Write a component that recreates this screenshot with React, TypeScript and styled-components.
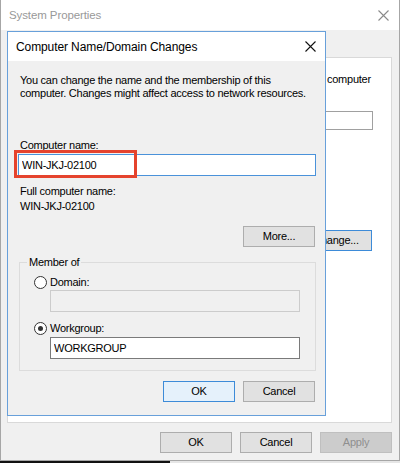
import styled, { createGlobalStyle } from "styled-components";

const GlobalStyle = createGlobalStyle`
  html, body {
    margin: 0;
    padding: 0;
    background: #ffffff;
  }
  body {
    font-family: "Liberation Sans", Arial, sans-serif;
    font-size: 11px;
    letter-spacing: -0.25px;
    color: #000;
  }
  * {
    box-sizing: border-box;
  }
`;

const Screen = styled.div`
  width: 400px;
  height: 463px;
  overflow: hidden;
  display: flex;
  flex-direction: column;
`;

const Window = styled.div`
  position: relative;
  width: 400px;
  height: 461px;
  display: flex;
  flex-direction: column;
  background: #f0f0f0;
  border-left: 1px solid #a6a6a6;
  border-right: 1px solid #a6a6a6;
  border-bottom: 1px solid #a6a6a6;
`;

const TitleBar = styled.div<{ $height: number; $padRight: number }>`
  height: ${(p) => p.$height}px;
  flex: none;
  display: flex;
  align-items: center;
  justify-content: space-between;
  padding: 0 ${(p) => p.$padRight}px 0 8px;
  background: #ffffff;
`;

const WindowTitle = styled.span`
  font-size: 11.5px;
  color: #999999;
  letter-spacing: -0.1px;
`;

const DialogTitle = styled.span`
  font-size: 12px;
  color: #000;
  letter-spacing: -0.1px;
`;

const WindowBody = styled.div`
  flex: 1;
  display: flex;
  flex-direction: column;
  padding: 27px 7px 7px 6px;
`;

const TabPage = styled.div`
  height: 366px;
  flex: none;
  border: 1px solid #d9d9d9;
  background: #ffffff;
  display: flex;
  flex-direction: column;
  padding-top: 15px;
`;

const HiddenText = styled.p`
  margin: 0 0 0 319px;
  line-height: 13px;
  white-space: nowrap;
`;

const HiddenBox = styled.div`
  margin: 25px 0 0 292px;
  width: 73px;
  height: 19px;
  border: 1px solid #a0a0a0;
  background: #fff;
`;

const HiddenButtonSlot = styled.div`
  margin: 100px 0 0 292px;
`;

const ButtonRow = styled.div<{ $top: number }>`
  display: flex;
  justify-content: flex-end;
  gap: 8px;
  margin-top: ${(p) => p.$top}px;
`;

type Variant = "default" | "primary" | "disabled" | "focused";

const Button = styled.button<{ $variant?: Variant }>`
  width: 72px;
  height: 21px;
  padding: 0;
  font: inherit;
  letter-spacing: inherit;
  line-height: 19px;
  color: ${(p) => (p.$variant === "disabled" ? "#8f8f8f" : "#000")};
  background: ${(p) =>
    p.$variant === "primary" ? "#e5f1fb" : p.$variant === "disabled" ? "#cccccc" : "#e1e1e1"};
  border: 1px solid
    ${(p) =>
      p.$variant === "primary" || p.$variant === "focused"
        ? "#3d8bd8"
        : p.$variant === "disabled"
        ? "#bfbfbf"
        : "#adadad"};
  border-radius: 0;
`;

const Dialog = styled.div`
  position: absolute;
  left: 6px;
  top: 31px;
  width: 319px;
  height: 385px;
  display: flex;
  flex-direction: column;
  border: 1px solid #68a0da;
  background: #f0f0f0;
`;

const DialogBody = styled.div`
  flex: 1;
  display: flex;
  flex-direction: column;
  padding: 12.5px 10px 0 12px;
`;

const Text = styled.p<{ $top?: number }>`
  margin: ${(p) => p.$top ?? 0}px 0 0 0;
  line-height: 13px;
  white-space: nowrap;
`;

const FieldWrap = styled.div<{ $top: number; $left: number; $width: number }>`
  position: relative;
  margin: ${(p) => p.$top}px 0 0 ${(p) => p.$left}px;
  width: ${(p) => p.$width}px;
`;

const TextBox = styled.input<{ $state?: "focused" | "disabled" }>`
  display: block;
  width: 100%;
  height: 22px;
  margin: 0;
  padding: 0 0 0 3px;
  font: inherit;
  letter-spacing: inherit;
  color: #000;
  outline: none;
  border-radius: 0;
  background: ${(p) => (p.$state === "disabled" ? "#f0f0f0" : "#ffffff")};
  border: 1px solid
    ${(p) => (p.$state === "focused" ? "#4a92da" : p.$state === "disabled" ? "#cccccc" : "#7a7a7a")};
`;

const Highlight = styled.div`
  position: absolute;
  left: -4px;
  top: -4px;
  width: 123px;
  height: 28px;
  border: 3px solid #e5432d;
  pointer-events: none;
`;

const MoreRow = styled.div`
  display: flex;
  justify-content: flex-end;
  margin-top: 13.5px;
`;

const GroupBox = styled.fieldset`
  margin: 8.5px 0 0 -1px;
  width: 297px;
  min-width: 0;
  padding: 7px 0 11px 0;
  border: 1px solid #dcdcdc;
  display: flex;
  flex-direction: column;
`;

const GroupLegend = styled.legend`
  margin-left: 7px;
  padding: 0 2px;
  line-height: 13px;
`;

const RadioRow = styled.label<{ $top?: number }>`
  display: flex;
  align-items: center;
  gap: 3px;
  margin-top: ${(p) => p.$top ?? 0}px;
  padding-left: 14px;
  line-height: 13px;
`;

const RadioDot = styled.span<{ $checked?: boolean }>`
  width: 13px;
  height: 13px;
  flex: none;
  border-radius: 50%;
  border: 1px solid #333333;
  background: #ffffff;
  display: flex;
  align-items: center;
  justify-content: center;

  &::after {
    content: "";
    width: 5px;
    height: 5px;
    border-radius: 50%;
    background: ${(p) => (p.$checked ? "#333333" : "transparent")};
  }
`;

const BottomStrip = styled.div`
  height: 2px;
  display: flex;
  background: #e6e6e6;
`;

const TaskSegment = styled.div`
  width: 170px;
  background: #111111;
`;

function CloseGlyph({ color }: { color: string }) {
  return (
    <svg width="11" height="11" viewBox="0 0 11 11">
      <path d="M0.5 0.5 L10.5 10.5 M10.5 0.5 L0.5 10.5" stroke={color} strokeWidth="1.1" />
    </svg>
  );
}

export default function App() {
  return (
    <Screen>
      <GlobalStyle />
      <Window>
        <TitleBar $height={30} $padRight={10}>
          <WindowTitle>System Properties</WindowTitle>
          <CloseGlyph color="#8a8a8a" />
        </TitleBar>
        <WindowBody>
          <TabPage>
            <HiddenText>computer</HiddenText>
            <HiddenBox />
            <HiddenButtonSlot>
              <Button $variant="focused">Change...</Button>
            </HiddenButtonSlot>
          </TabPage>
          <ButtonRow $top={9}>
            <Button>OK</Button>
            <Button>Cancel</Button>
            <Button $variant="disabled">Apply</Button>
          </ButtonRow>
        </WindowBody>

        <Dialog>
          <TitleBar $height={29} $padRight={9}>
            <DialogTitle>Computer Name/Domain Changes</DialogTitle>
            <CloseGlyph color="#111111" />
          </TitleBar>
          <DialogBody>
            <Text>You can change the name and the membership of this</Text>
            <Text>computer. Changes might affect access to network resources.</Text>

            <Text $top={39}>Computer name:</Text>
            <FieldWrap $top={2.5} $left={-2} $width={298}>
              <TextBox $state="focused" readOnly value="WIN-JKJ-02100" />
              <Highlight />
            </FieldWrap>

            <Text $top={8.5}>Full computer name:</Text>
            <Text $top={2}>WIN-JKJ-02100</Text>

            <MoreRow>
              <Button>More...</Button>
            </MoreRow>

            <GroupBox>
              <GroupLegend>Member of</GroupLegend>
              <RadioRow>
                <RadioDot />
                <span>Domain:</span>
              </RadioRow>
              <FieldWrap $top={1} $left={30} $width={250}>
                <TextBox $state="disabled" readOnly value="" />
              </FieldWrap>
              <RadioRow $top={10}>
                <RadioDot $checked />
                <span>Workgroup:</span>
              </RadioRow>
              <FieldWrap $top={2.5} $left={30} $width={250}>
                <TextBox readOnly value="WORKGROUP" />
              </FieldWrap>
            </GroupBox>

            <ButtonRow $top={10}>
              <Button $variant="primary">OK</Button>
              <Button>Cancel</Button>
            </ButtonRow>
          </DialogBody>
        </Dialog>
      </Window>
      <BottomStrip>
        <TaskSegment />
      </BottomStrip>
    </Screen>
  );
}
